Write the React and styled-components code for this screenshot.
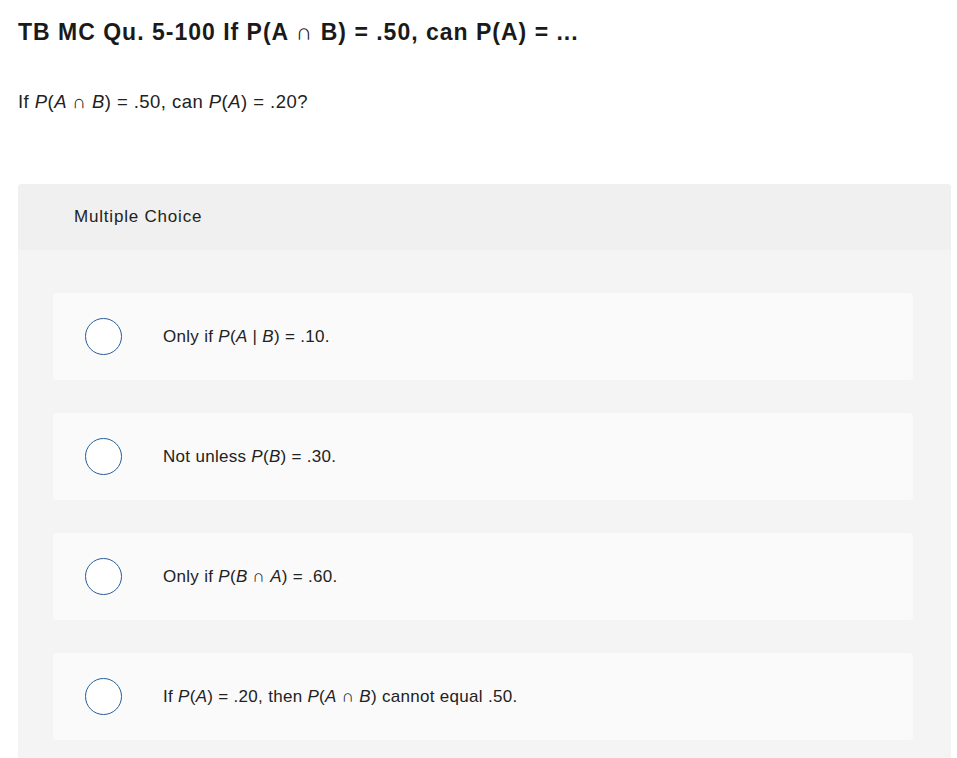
import React from 'react';
import styled, { createGlobalStyle } from 'styled-components';

const Global = createGlobalStyle`
  body {
    margin: 0;
    background: #fff;
    font-family: 'Liberation Sans', Arial, sans-serif;
    color: #1f1f1f;
  }
`;

const Page = styled.div`
  padding: 0 6px 0 18px;
`;

const Title = styled.h1`
  margin: 0;
  padding-top: 18px;
  font-size: 23px;
  font-weight: 700;
  letter-spacing: 1px;
  line-height: 28px;
  color: #1a1a1a;
`;

const Question = styled.p`
  margin: 44px 0 0;
  font-size: 18.5px;
  letter-spacing: 0.45px;
  line-height: 24px;
  color: #222;
`;

const Panel = styled.section`
  margin-top: 70px;
  background: #f4f4f4;
  border-radius: 4px 4px 0 0;
  overflow: hidden;
`;

const PanelHead = styled.div`
  height: 66px;
  display: flex;
  align-items: center;
  padding-left: 56px;
  background: #f0f0f0;
  font-size: 17px;
  letter-spacing: 0.8px;
  color: #222;
`;

const Options = styled.div`
  display: flex;
  flex-direction: column;
  gap: 33px;
  padding: 43px 38px 18px 35px;
`;

const Option = styled.label`
  height: 87px;
  display: flex;
  align-items: center;
  background: #fafafa;
  border-radius: 4px;
  font-size: 17px;
  letter-spacing: 0.3px;
  color: #222;
  cursor: pointer;
`;

const Radio = styled.span`
  box-sizing: border-box;
  width: 37px;
  height: 37px;
  margin-left: 32px;
  margin-right: 41px;
  border: 1.3px solid #2a5f97;
  border-radius: 50%;
  background: #fff;
  flex-shrink: 0;
`;

const V = styled.i`
  font-style: italic;
`;

const choices = [
  <>Only if <V>P</V>(<V>A</V> | <V>B</V>) = .10.</>,
  <>Not unless <V>P</V>(<V>B</V>) = .30.</>,
  <>Only if <V>P</V>(<V>B</V> ∩ <V>A</V>) = .60.</>,
  <>If <V>P</V>(<V>A</V>) = .20, then <V>P</V>(<V>A</V> ∩ <V>B</V>) cannot equal .50.</>,
];

export default function App() {
  return (
    <Page>
      <Global />
      <Title>TB MC Qu. 5-100 If P(A ∩ B) = .50, can P(A) = ...</Title>
      <Question>
        If <V>P</V>(<V>A</V> ∩ <V>B</V>) = .50, can <V>P</V>(<V>A</V>) = .20?
      </Question>
      <Panel>
        <PanelHead>Multiple Choice</PanelHead>
        <Options>
          {choices.map((c, i) => (
            <Option key={i}>
              <Radio />
              <span>{c}</span>
            </Option>
          ))}
        </Options>
      </Panel>
    </Page>
  );
}
